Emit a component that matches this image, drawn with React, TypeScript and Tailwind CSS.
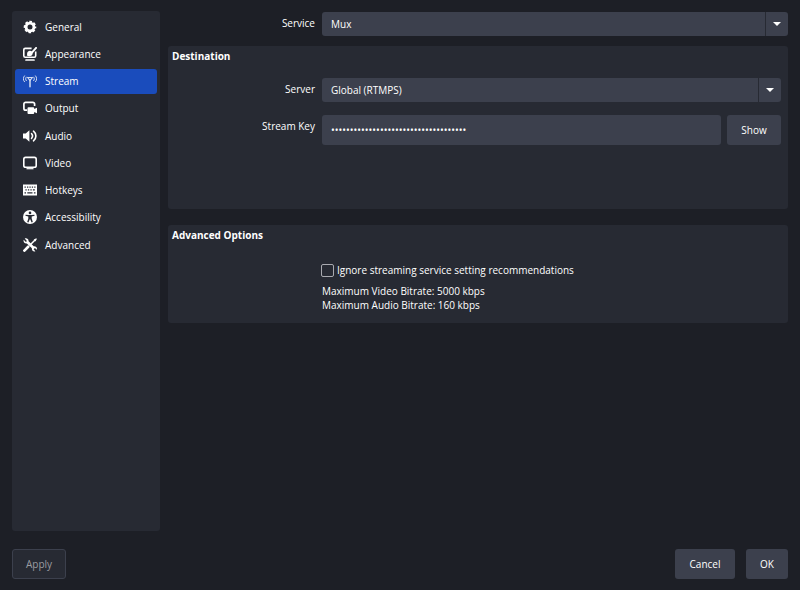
import { useState, type ReactNode } from "react";
import { clsx } from "clsx";

const GeneralIcon = () => (
  <svg viewBox="0 0 14 14" className="size-[14px]" fill="none" stroke="currentColor">
    <circle cx="7" cy="7" r="3.9" strokeWidth="2.8" />
    <circle cx="7" cy="7" r="5.4" strokeWidth="1.8" strokeDasharray="2.6 1.641" strokeDashoffset="1.3" />
  </svg>
);

const AppearanceIcon = () => (
  <svg viewBox="0 0 14 14" className="size-[14px]" fill="none" stroke="currentColor">
    <path d="M8.6 1.4H2.2A1.4 1.4 0 0 0 .8 2.8v6a1.4 1.4 0 0 0 1.4 1.4h9.1a1.4 1.4 0 0 0 1.4-1.4V4.6" strokeWidth="1.6" />
    <path d="M3 13h8" strokeWidth="1.7" strokeLinecap="round" />
    <path d="M13.1 0.9 8.9 5.6" strokeWidth="1.9" strokeLinecap="round" />
    <path d="M3.8 8.6C4.500 7.700 3.600 6.200 4.800 4.800c1.200-1.400 3.200-1.400 4.300 0 1 1.500.6 3.300-.8 4-1.400.6-3.200.4-4.500-.2z" fill="currentColor" stroke="none" />
  </svg>
);

const StreamIcon = () => (
  <svg viewBox="0 0 14 14" className="size-[14px] opacity-80" fill="none" stroke="currentColor" strokeLinecap="round">
    <path d="M1.500 1.800C-.1 3.400-.1 6.200 1.500 7.800M12.500 1.800c1.600 1.600 1.600 4.400 0 6" strokeWidth="1" />
    <path d="M3.300 3.100c-.9 1-.9 2.600 0 3.600M10.700 3.100c.9 1 .9 2.600 0 3.600" strokeWidth="1" />
    <path d="M4.700 3.500h4.600L7 6.600z" strokeWidth="1.100" />
    <path d="M7 5.500v7.300" strokeWidth="1.500" />
  </svg>
);

const OutputIcon = () => (
  <svg viewBox="0 0 14 14" className="size-[14px]">
    <path
      d="M4.200 9.200H2.600A1.700 1.700 0 0 1 .9 7.500V3A1.700 1.700 0 0 1 2.600 1.300h7.300A1.700 1.700 0 0 1 11.600 3v2"
      fill="none"
      stroke="currentColor"
      strokeWidth="1.700"
    />
    <path
      d="M5.500 6.200h4.700a1 1 0 0 1 1 1v.900l2.800-1.300v5.400l-2.800-1.300v1.200a1 1 0 0 1-1 1H5.500a1 1 0 0 1-1-1V7.200a1 1 0 0 1 1-1z"
      fill="currentColor"
    />
  </svg>
);

const AudioIcon = () => (
  <svg viewBox="0 0 14 14" className="size-[14px]" fill="none" stroke="currentColor" strokeLinecap="round">
    <path d="M0 4.600h2.700L6.400 1.200v11.600L2.700 9.400H0z" fill="currentColor" stroke="none" />
    <path d="M8.500 4.600c1.200 1.300 1.200 3.500 0 4.800" strokeWidth="1.500" />
    <path d="M10.500 2.200c3.200 2.600 3.200 7 0 9.600" strokeWidth="1.600" />
  </svg>
);

const VideoIcon = () => (
  <svg viewBox="0 0 14 14" className="size-[14px]" fill="none" stroke="currentColor">
    <rect x="0.8" y="1.400" width="12.400" height="9.900" rx="1.800" strokeWidth="1.600" />
    <path d="M3.500 12.700h7" strokeWidth="1.200" />
  </svg>
);

const HotkeysIcon = () => (
  <svg viewBox="0 0 14 14" className="size-[14px]">
    <path d="M0 1.500h14v11H0z" fill="currentColor" />
    <path
      d="M1.500 4.100h1.300M4 4.100h1.300M6.400 4.100h1.300M8.800 4.100h1.300M11.200 4.100h1.300M2.400 6.900h1.300M4.900 6.900h1.300M7.400 6.900h1.300M9.900 6.900h1.900M1.500 9.800h1.500M4.300 9.800h5.200M10.900 9.800h1.600"
      fill="none"
      stroke="#272a33"
      strokeWidth="1.200"
    />
  </svg>
);

const AccessibilityIcon = () => (
  <svg viewBox="0 0 14 14" className="size-[14px]">
    <circle cx="7" cy="7" r="7" fill="currentColor" />
    <g fill="#272a33">
      <circle cx="7" cy="2.900" r="1.300" />
      <path d="M2.600 4.700 5.700 5h2.600l3.100-.3.200 1-2.900.8v2l1.100 3.600-1.200.4L7.200 9.300h-.4l-1.400 3.200-1.200-.4 1.100-3.600v-2l-2.900-.8z" />
    </g>
  </svg>
);

const AdvancedIcon = () => (
  <svg viewBox="0 0 14 14" className="size-[14px]" fill="none" stroke="currentColor">
    <path d="M.7 1.700 2.900 3.900 3.900 3 1.700.6C3.500-.2 5.700.9 5.600 3.300L10.700 8.300c2.300-.3 3.700 1.400 3.200 3.500l-2-1.800-1.300 1.300 1.800 2c-2.100.7-3.900-.9-3.500-3.100L3.800 5.400C1.500 5.700 0 3.800.7 1.700z" fill="currentColor" stroke="none" />
    <path d="M12.300 1.700 7.800 6.200" strokeWidth="1.500" />
    <path d="m13.200.2.700.7-1.600 2.500-1.600-1.600z" fill="currentColor" stroke="none" />
    <path d="m5.200 8.800-3.800 3.800" strokeWidth="2.700" strokeLinecap="round" />
  </svg>
);

interface Section {
  name: string;
  icon: ReactNode;
}

const sections: Section[] = [
  { name: "General", icon: <GeneralIcon /> },
  { name: "Appearance", icon: <AppearanceIcon /> },
  { name: "Stream", icon: <StreamIcon /> },
  { name: "Output", icon: <OutputIcon /> },
  { name: "Audio", icon: <AudioIcon /> },
  { name: "Video", icon: <VideoIcon /> },
  { name: "Hotkeys", icon: <HotkeysIcon /> },
  { name: "Accessibility", icon: <AccessibilityIcon /> },
  { name: "Advanced", icon: <AdvancedIcon /> },
];

interface DropdownProps {
  id: string;
  options: string[];
}

const Dropdown = ({ id, options }: DropdownProps) => (
  <div className="relative min-w-0 flex-1">
    <select
      id={id}
      className="block h-6 w-full appearance-none rounded-[3px] bg-[#3c404d] pr-7 pl-[9px] text-white outline-none"
    >
      {options.map(option => (
        <option key={option}>{option}</option>
      ))}
    </select>
    <span className="pointer-events-none absolute inset-y-0 right-0 flex w-[23px] items-center justify-center border-l border-[#272a33]">
      <svg viewBox="0 0 8 4" className="h-1 w-2" fill="currentColor">
        <path d="M0 0h8L4 4z" />
      </svg>
    </span>
  </div>
);

interface FieldProps {
  id: string;
  label: string;
  children: ReactNode;
}

const Field = ({ id, label, children }: FieldProps) => (
  <div className="flex">
    <label htmlFor={id} className="mr-[7px] w-[147px] shrink-0 pt-1 text-right">
      {label}
    </label>
    {children}
  </div>
);

const buttonClass = "h-[30px] rounded-[3px] bg-[#3c404d] text-white hover:bg-[#4a4f5e]";

export default function App() {
  const [active, setActive] = useState("Stream");
  const [showKey, setShowKey] = useState(false);

  return (
    <div className="flex min-h-screen flex-col bg-[#1d1f26] px-3 py-[11px] font-['Open_Sans',sans-serif] text-[10px] leading-[14px] text-white">
      <div className="flex flex-1 gap-2">
        {/* Section list */}
        <nav className="w-[148px] shrink-0 rounded-[3px] bg-[#272a33] px-[3px] pt-[3px]">
          <ul className="flex h-[243px] flex-col justify-between">
            {sections.map(section => (
              <li key={section.name}>
                <button
                  onClick={() => setActive(section.name)}
                  className={clsx(
                    "flex h-[25px] w-full items-center gap-2 rounded-[3px] pl-2 text-left",
                    active === section.name && "bg-[#1a4cbc]"
                  )}
                >
                  {section.icon}
                  {section.name}
                </button>
              </li>
            ))}
          </ul>
        </nav>

        <main className="min-w-0 flex-1 pt-px">
          <Field id="service" label="Service">
            <Dropdown id="service" options={["Mux"]} />
          </Field>

          <section className="mt-[10px] h-[163px] rounded-[3px] bg-[#272a33] pt-[3px] pr-[7px]">
            <h2 className="pl-1 font-bold">Destination</h2>
            <div className="mt-[15px] flex flex-col gap-[13px]">
              <Field id="server" label="Server">
                <Dropdown id="server" options={["Global (RTMPS)"]} />
              </Field>
              <Field id="stream-key" label="Stream Key">
                <input
                  id="stream-key"
                  type={showKey ? "text" : "password"}
                  defaultValue="a1b2c3d4-e5f6-7890-abcd-ef0123456789"
                  className="h-[30px] min-w-0 flex-1 rounded-[3px] bg-[#3c404d] px-[9px] outline-none"
                />
                <button onClick={() => setShowKey(!showKey)} className={clsx(buttonClass, "ml-[6px] w-[54px]")}>
                  {showKey ? "Hide" : "Show"}
                </button>
              </Field>
            </div>
          </section>

          <section className="mt-4 rounded-[3px] bg-[#272a33] pt-[3px] pb-[11px]">
            <h2 className="pl-1 font-bold">Advanced Options</h2>
            <div className="mt-[21px] pl-[153px]">
              <label className="flex items-center gap-[3px]">
                <input
                  type="checkbox"
                  className="size-[13px] appearance-none rounded-[2px] border border-[#a9aab0] checked:bg-[#1a4cbc]"
                />
                Ignore streaming service setting recommendations
              </label>
              <p className="mt-[7px] pl-px">
                Maximum Video Bitrate: 5000 kbps
                <br />
                Maximum Audio Bitrate: 160 kbps
              </p>
            </div>
          </section>
        </main>
      </div>

      {/* Dialog buttons */}
      <footer className="mt-[18px] flex">
        <button
          disabled
          className="h-[30px] w-[54px] rounded-[3px] border border-[#3c404d] bg-[#272a33] text-[#9b9ca1]"
        >
          Apply
        </button>
        <button className={clsx(buttonClass, "ml-auto w-[60px]")}>Cancel</button>
        <button className={clsx(buttonClass, "ml-[11px] w-[42px]")}>OK</button>
      </footer>
    </div>
  );
}
